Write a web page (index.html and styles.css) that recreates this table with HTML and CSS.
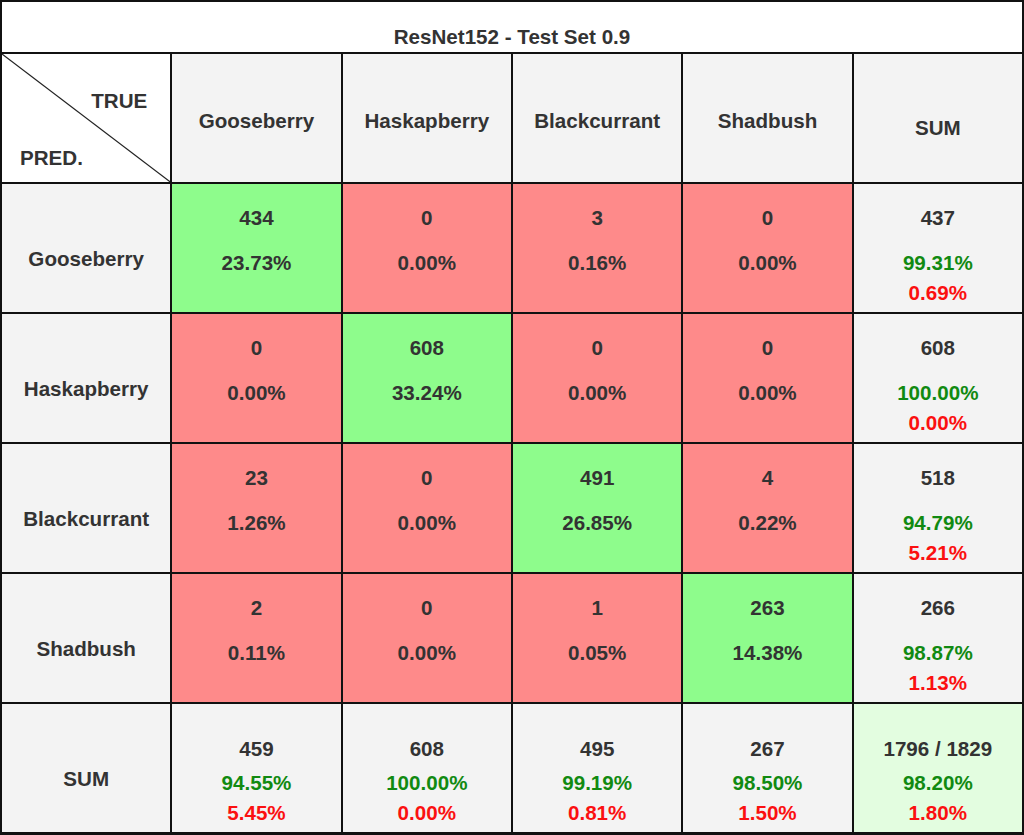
FILE: index.html
```html
<!DOCTYPE html>
<html lang="en">
<head>
<meta charset="utf-8">
<title>ResNet152 - Test Set 0.9</title>
<link rel="stylesheet" href="styles.css">
</head>
<body>
<div class="matrix">
  <div class="title">ResNet152 - Test Set 0.9</div>

  <div class="corner">
    <svg class="diag" viewBox="0 0 100 100" preserveAspectRatio="none"><line x1="0" y1="0" x2="100" y2="100" vector-effect="non-scaling-stroke"/></svg>
    <span class="true">TRUE</span>
    <span class="pred">PRED.</span>
  </div>
  <div class="head">Gooseberry</div>
  <div class="head">Haskapberry</div>
  <div class="head">Blackcurrant</div>
  <div class="head">Shadbush</div>
  <div class="head head-sum">SUM</div>

  <div class="label">Gooseberry</div>
  <div class="cell good"><span>434</span><span class="pct">23.73%</span></div>
  <div class="cell bad"><span>0</span><span class="pct">0.00%</span></div>
  <div class="cell bad"><span>3</span><span class="pct">0.16%</span></div>
  <div class="cell bad"><span>0</span><span class="pct">0.00%</span></div>
  <div class="cell sum"><span>437</span><span class="pct ok">99.31%</span><span class="err">0.69%</span></div>

  <div class="label">Haskapberry</div>
  <div class="cell bad"><span>0</span><span class="pct">0.00%</span></div>
  <div class="cell good"><span>608</span><span class="pct">33.24%</span></div>
  <div class="cell bad"><span>0</span><span class="pct">0.00%</span></div>
  <div class="cell bad"><span>0</span><span class="pct">0.00%</span></div>
  <div class="cell sum"><span>608</span><span class="pct ok">100.00%</span><span class="err">0.00%</span></div>

  <div class="label">Blackcurrant</div>
  <div class="cell bad"><span>23</span><span class="pct">1.26%</span></div>
  <div class="cell bad"><span>0</span><span class="pct">0.00%</span></div>
  <div class="cell good"><span>491</span><span class="pct">26.85%</span></div>
  <div class="cell bad"><span>4</span><span class="pct">0.22%</span></div>
  <div class="cell sum"><span>518</span><span class="pct ok">94.79%</span><span class="err">5.21%</span></div>

  <div class="label">Shadbush</div>
  <div class="cell bad"><span>2</span><span class="pct">0.11%</span></div>
  <div class="cell bad"><span>0</span><span class="pct">0.00%</span></div>
  <div class="cell bad"><span>1</span><span class="pct">0.05%</span></div>
  <div class="cell good"><span>263</span><span class="pct">14.38%</span></div>
  <div class="cell sum"><span>266</span><span class="pct ok">98.87%</span><span class="err">1.13%</span></div>

  <div class="label label-sum">SUM</div>
  <div class="cell total"><span>459</span><span class="pct ok">94.55%</span><span class="err">5.45%</span></div>
  <div class="cell total"><span>608</span><span class="pct ok">100.00%</span><span class="err">0.00%</span></div>
  <div class="cell total"><span>495</span><span class="pct ok">99.19%</span><span class="err">0.81%</span></div>
  <div class="cell total"><span>267</span><span class="pct ok">98.50%</span><span class="err">1.50%</span></div>
  <div class="cell total grand"><span>1796 / 1829</span><span class="pct ok">98.20%</span><span class="err">1.80%</span></div>
</div>
</body>
</html>
```

FILE: styles.css
```css
* {
  box-sizing: border-box;
}

html, body {
  margin: 0;
  padding: 0;
  background: #ffffff;
}

body {
  font-family: "Liberation Sans", Arial, sans-serif;
  font-weight: bold;
  font-size: 20.6px;
  color: #333333;
}

.matrix {
  width: 1024px;
  display: grid;
  grid-template-columns: repeat(6, 1fr);
  grid-template-rows: 50px repeat(6, 128px);
  gap: 2px;
  padding: 2px 2px 3px 2px;
  background: #111111;
}

.title {
  grid-column: 1 / -1;
  background: #ffffff;
  text-align: center;
  line-height: 30px;
  padding-top: 20px;
}

.corner {
  position: relative;
  background: #ffffff;
  display: flex;
  flex-direction: column;
  line-height: 30px;
  padding-top: 32px;
}

.diag {
  position: absolute;
  left: 0;
  top: 0;
  width: 100%;
  height: 100%;
}

.diag line {
  stroke: #222222;
  stroke-width: 1.2;
}

.true {
  align-self: flex-end;
  padding-right: 23px;
}

.pred {
  align-self: flex-start;
  padding-left: 18px;
  margin-top: 27px;
}

.head {
  background: #f3f3f3;
  text-align: center;
  line-height: 30px;
  padding-top: 52px;
}

.head-sum {
  padding-top: 59px;
}

.label {
  background: #f3f3f3;
  text-align: center;
  line-height: 30px;
  padding-top: 60px;
}

.label-sum {
  padding-top: 60px;
}

.cell {
  display: flex;
  flex-direction: column;
  align-items: center;
  line-height: 30px;
  padding-top: 19px;
}

.cell .pct {
  margin-top: 15px;
}

.good {
  background: #8efc8c;
}

.bad {
  background: #fe8a8a;
}

.sum {
  background: #f3f3f3;
}

.total {
  background: #f3f3f3;
  padding-top: 30px;
}

.total .pct {
  margin-top: 4px;
}

.grand {
  background: #e3fde0;
}

.ok {
  color: #118a11;
}

.err {
  color: #fb1010;
}
```
